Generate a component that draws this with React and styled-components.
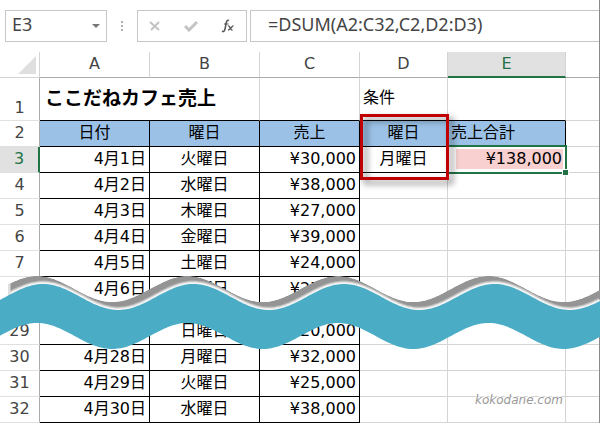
import React from 'react';
import styled, { createGlobalStyle, css } from 'styled-components';

const GRID = '#d4d4d4';
const GREEN = '#217346';

const GlobalStyle = createGlobalStyle`
  body {
    margin: 0;
    background: #fff;
    overflow-x: hidden;
  }
  * {
    box-sizing: border-box;
  }
`;

const Page = styled.main`
  border-right: 1px solid #8a8a8a;
  font-family: 'DejaVu Sans', 'Noto Sans CJK JP', sans-serif;
  font-size: 16px;
  line-height: 20px;
  color: #000;
`;

const Toolbar = styled.div`
  display: flex;
  align-items: center;
  padding: 10px 0;
`;

const Field = styled.div`
  display: flex;
  align-items: center;
  height: 32px;
  border: 1px solid #c6c6c6;
`;

const NameBox = styled(Field)`
  width: 102px;
  margin-left: 5px;
  padding-right: 6px;
`;

const Actions = styled(Field)`
  width: 110px;
  margin-right: 3px;
  justify-content: space-around;
`;

const FormulaBox = styled(Field)`
  flex: 1;
  border-right: 0;
`;

const TextInput = styled.input`
  flex: 1;
  min-width: 0;
  width: 100%;
  height: 30px;
  border: 0;
  outline: 0;
  background: none;
  color: #444;
  font-family: 'Noto Sans', 'Noto Sans CJK JP', sans-serif;
  font-size: 18px;
  padding: 0 0 4px ${({ $indent }) => $indent}px;
`;

const IconButton = styled.button`
  display: flex;
  padding: 0;
  border: 0;
  background: none;
`;

const Grip = styled.svg`
  margin: 0 14px;
`;

const Sheet = styled.div`
  position: relative;
  border-bottom: 1px solid #8a8a8a;
`;

const Table = styled.table`
  width: 100%;
  margin-bottom: -1px;
  table-layout: fixed;
  border-collapse: separate;
  border-spacing: 0;
`;

const Col = styled.col`
  width: ${({ $width }) => ($width ? `${$width}px` : 'auto')};
`;

const Row = styled.tr`
  height: ${({ $height }) => $height || 26}px;
`;

const ColumnHeader = styled.th`
  padding: 0 0 2px;
  border-right: 1px solid ${GRID};
  border-bottom: 1px solid #ababab;
  font-weight: normal;
  color: #444;
  ${({ $active }) =>
    $active &&
    css`
      padding-bottom: 1px;
      background: #e1e1e1;
      border-bottom: 2px solid ${GREEN};
      color: ${GREEN};
    `}
  &:last-child {
    border-right: 0;
  }
`;

const Corner = styled.td`
  padding: 0 3px 0 0;
  border-right: 1px solid ${GRID};
  border-bottom: 1px solid ${GRID};
  svg {
    display: block;
    margin-left: auto;
  }
`;

const RowHeader = styled.th`
  padding: 0 0 2px;
  border-right: 1px solid #ababab;
  border-bottom: 1px solid #e1e1e1;
  font-weight: normal;
  color: #444;
  vertical-align: ${({ $bottom }) => ($bottom ? 'bottom' : 'middle')};
  ${({ $active }) =>
    $active &&
    css`
      background: #e1e1e1;
      border-right: 2px solid ${GREEN};
      color: ${GREEN};
    `}
`;

const Cell = styled.td`
  position: ${({ $anchor }) => ($anchor ? 'relative' : 'static')};
  padding: 0 3px 2px;
  white-space: nowrap;
  text-align: ${({ $align }) => $align || 'left'};
  background: ${({ $fill }) => $fill || 'transparent'};
  border-right: 1px solid ${({ $boxed }) => ($boxed ? '#000' : GRID)};
  border-bottom: 1px solid
    ${({ $boxed, $underlined }) => ($boxed || $underlined ? '#000' : GRID)};
  &:last-child {
    border-right: 0;
  }
`;

const TitleCell = styled(Cell)`
  padding-left: 5px;
  font-size: 19px;
  font-weight: bold;
`;

const Callout = styled.div`
  position: absolute;
  top: -7px;
  left: 0;
  right: -2px;
  height: 66px;
  border: 3px solid #c00000;
  filter: drop-shadow(4px 4px 3px rgba(0, 0, 0, 0.5));
  z-index: 2;
  pointer-events: none;
`;

const Selection = styled.div`
  position: absolute;
  inset: -2px -2px -2px -1px;
  border: 2px solid ${GREEN};
  &::after {
    content: '';
    position: absolute;
    right: -3px;
    bottom: -3px;
    width: 5px;
    height: 5px;
    background: ${GREEN};
    outline: 1px solid #fff;
  }
`;

const Highlight = styled.div`
  margin: 0 -1px 0 5px;
  padding-right: 1px;
  background: #f8d0d0;
`;

const Tear = styled.svg`
  position: absolute;
  top: 218px;
  left: 0;
  width: calc(100% + 1px);
  height: 90px;
`;

const Watermark = styled.div`
  position: absolute;
  right: 36px;
  bottom: 12px;
  font-size: 12px;
  font-style: italic;
  color: #999;
  text-shadow: -1px -1px 0 #fff;
`;

const BLUE = '#9bc2e6';

const TOP_ROWS = [
  [4, '4月2日', '水曜日', '¥38,000'],
  [5, '4月3日', '木曜日', '¥27,000'],
  [6, '4月4日', '金曜日', '¥39,000'],
  [7, '4月5日', '土曜日', '¥24,000'],
  [8, '4月6日', '日曜日', '¥27,000'],
];

const BOTTOM_ROWS = [
  [29, '4月27日', '日曜日', '¥20,000'],
  [30, '4月28日', '月曜日', '¥32,000'],
  [31, '4月29日', '火曜日', '¥25,000'],
  [32, '4月30日', '水曜日', '¥38,000'],
];

const wave = (crestX, crestY, from, to) => {
  const points = [];
  for (let x = from; x <= to; x += 2) {
    const y = crestY + 13 - 13 * Math.cos((2 * Math.PI * (x - crestX)) / 150.5);
    points.push(`${x},${y.toFixed(1)}`);
  }
  return points;
};

const band = (top, bottom) => `M${[...top, ...bottom.reverse()].join('L')}Z`;

const WavyTear = () => (
  <Tear viewBox="0 0 600 90" preserveAspectRatio="none" aria-hidden="true">
    <defs>
      <clipPath id="shade">
        <path d={band(wave(37, 6, 8, 600), wave(43, 16, 8, 600))} />
      </clipPath>
    </defs>
    <g clipPath="url(#shade)" fill="none">
      <path d={band(wave(37, 6, 8, 600), wave(43, 16, 8, 600))} fill="#949494" />
      <path d={`M${wave(43, 14, 8, 600).join('L')}`} stroke="#b4b4b4" strokeWidth="7" />
      <path d={`M${wave(43, 14, 8, 600).join('L')}`} stroke="#d8d8d8" strokeWidth="5" />
      <path d={`M${wave(43, 14, 8, 600).join('L')}`} stroke="#f6f6f6" strokeWidth="3" />
      <path d="M9 10V30" stroke="#e0e0e0" strokeWidth="3" />
    </g>
    <path d={band(wave(43, 14, 0, 600), wave(37, 53, 0, 600))} fill="#4bacc6" />
  </Tear>
);

const DataRow = ({ data: [number, date, day, sales] }) => (
  <Row>
    <RowHeader scope="row">{number}</RowHeader>
    <Cell $boxed $align="right">{date}</Cell>
    <Cell $boxed $align="center">{day}</Cell>
    <Cell $boxed $align="right">{sales}</Cell>
    <Cell />
    <Cell />
    <Cell />
  </Row>
);

const FormulaBar = () => (
  <Toolbar>
    <NameBox>
      <TextInput aria-label="名前ボックス" defaultValue="E3" $indent={6} />
      <IconButton aria-label="名前の一覧">
        <svg width="8" height="5" viewBox="0 0 8 5">
          <path d="M0 0h8L4 4z" fill="#777" />
        </svg>
      </IconButton>
    </NameBox>
    <Grip width="2" height="10" viewBox="0 0 2 10">
      <path d="M0 0h2v2H0zM0 4h2v2H0zM0 8h2v2H0z" fill="#b0b0b0" />
    </Grip>
    <Actions>
      <IconButton aria-label="キャンセル">
        <svg width="12" height="12" viewBox="0 0 12 12">
          <path d="M1 2l9 8M10 2l-8 8" stroke="#c3c3c3" strokeWidth="2" />
        </svg>
      </IconButton>
      <IconButton aria-label="入力">
        <svg width="14" height="12" viewBox="0 0 14 12">
          <path d="M1 6l4 4 8-8" fill="none" stroke="#c3c3c3" strokeWidth="3" />
        </svg>
      </IconButton>
      <IconButton aria-label="関数の挿入">
        <svg width="14" height="14" viewBox="0 0 14 14" fill="none" stroke="#555">
          <path d="M8 1.5C6.4.6 5.6 2 5.2 4L4 10c-.4 2-1.3 3-3 2.2" strokeWidth="1.5" />
          <path d="M3 5h4.5" />
          <path d="M7 7c2-.8 2.2 4.500 4.500 4M12.500 7C11 6.600 9 11.300 7 11" strokeWidth="1.3" />
        </svg>
      </IconButton>
    </Actions>
    <FormulaBox>
      <TextInput
        aria-label="数式バー"
        defaultValue="=DSUM(A2:C32,C2,D2:D3)"
        $indent={17}
      />
    </FormulaBox>
  </Toolbar>
);

const App = () => (
  <Page>
    <GlobalStyle />
    <FormulaBar />
    <Sheet>
      <Table>
        <colgroup>
          {[40, 110, 110, 100, 88, 118, 0].map((width, i) => (
            <Col key={i} $width={width} />
          ))}
        </colgroup>
        <thead>
          <Row>
            <Corner>
              <svg width="18" height="18" viewBox="0 0 18 18">
                <path d="M18 0v18H0z" fill="#dfdfdf" />
              </svg>
            </Corner>
            {['A', 'B', 'C', 'D', 'E', ''].map(name => (
              <ColumnHeader key={name} scope="col" $active={name === 'E'}>
                {name}
              </ColumnHeader>
            ))}
          </Row>
        </thead>
        <tbody>
          <Row $height={43}>
            <RowHeader scope="row" $bottom>1</RowHeader>
            <TitleCell colSpan={2} $underlined>ここだねカフェ売上</TitleCell>
            <Cell $underlined />
            <Cell $underlined>条件</Cell>
            <Cell $underlined />
            <Cell />
          </Row>
          <Row>
            <RowHeader scope="row">2</RowHeader>
            <Cell $boxed $fill={BLUE} $align="center">日付</Cell>
            <Cell $boxed $fill={BLUE} $align="center">曜日</Cell>
            <Cell $boxed $fill={BLUE} $align="center">売上</Cell>
            <Cell $boxed $fill={BLUE} $align="center" $anchor>
              曜日
              <Callout />
            </Cell>
            <Cell $boxed $fill={BLUE}>売上合計</Cell>
            <Cell />
          </Row>
          <Row>
            <RowHeader scope="row" $active>3</RowHeader>
            <Cell $boxed $align="right">4月1日</Cell>
            <Cell $boxed $align="center">火曜日</Cell>
            <Cell $boxed $align="right">¥30,000</Cell>
            <Cell $boxed $align="center">月曜日</Cell>
            <Cell $boxed $align="right" $anchor>
              <Highlight>¥138,000</Highlight>
              <Selection />
            </Cell>
            <Cell />
          </Row>
          {TOP_ROWS.map(data => (
            <DataRow key={data[0]} data={data} />
          ))}
          <Row $height={16}>
            <td colSpan={7} />
          </Row>
          {BOTTOM_ROWS.map(data => (
            <DataRow key={data[0]} data={data} />
          ))}
        </tbody>
      </Table>
      <WavyTear />
      <Watermark>kokodane.com</Watermark>
    </Sheet>
  </Page>
);

export default App;
